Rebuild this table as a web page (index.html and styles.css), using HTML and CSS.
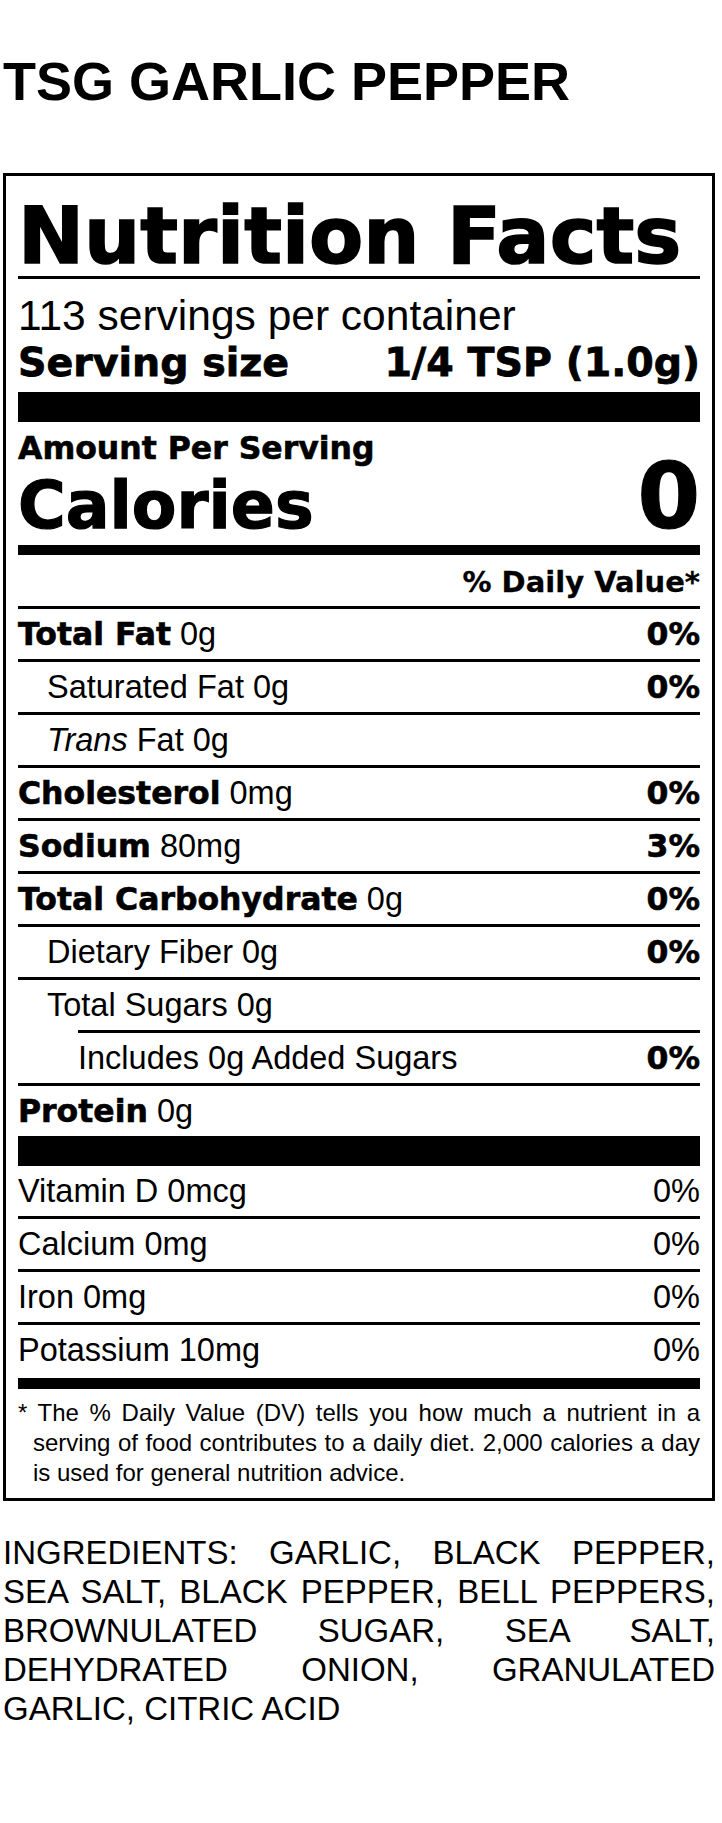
FILE: index.html
```html
<!DOCTYPE html>
<html lang="en">
<head>
<meta charset="utf-8">
<title>TSG Garlic Pepper – Nutrition Facts</title>
<link rel="stylesheet" href="styles.css">
</head>
<body>
<div class="page">
  <h1 class="product">TSG GARLIC PEPPER</h1>
  <section class="label">
    <h2 class="label-title">Nutrition Facts</h2>
    <div class="servings">
      <div class="servings-count">113 servings per container</div>
      <div class="serving-size"><span>Serving size</span><span>1/4 TSP (1.0g)</span></div>
    </div>
    <div class="calories">
      <div class="amount">Amount Per Serving</div>
      <div class="cal-row"><span class="cal-label">Calories</span><span class="cal-value">0</span></div>
    </div>
    <div class="dv-head">% Daily Value*</div>
    <div class="row"><span><b>Total Fat</b> 0g</span><b>0%</b></div>
    <div class="row ind1"><span>Saturated Fat 0g</span><b>0%</b></div>
    <div class="row ind1"><span><i>Trans</i> Fat 0g</span></div>
    <div class="row"><span><b>Cholesterol</b> 0mg</span><b>0%</b></div>
    <div class="row"><span><b>Sodium</b> 80mg</span><b>3%</b></div>
    <div class="row"><span><b>Total Carbohydrate</b> 0g</span><b>0%</b></div>
    <div class="row ind1"><span>Dietary Fiber 0g</span><b>0%</b></div>
    <div class="row ind1 no-rule"><span>Total Sugars 0g</span></div>
    <div class="added-wrap">
      <div class="row added"><span>Includes 0g Added Sugars</span><b>0%</b></div>
    </div>
    <div class="row protein"><span><b>Protein</b> 0g</span></div>
    <div class="row"><span>Vitamin D 0mcg</span><span>0%</span></div>
    <div class="row"><span>Calcium 0mg</span><span>0%</span></div>
    <div class="row"><span>Iron 0mg</span><span>0%</span></div>
    <div class="row last"><span>Potassium 10mg</span><span>0%</span></div>
    <p class="footnote">* The % Daily Value (DV) tells you how much a nutrient in a serving of food contributes to a daily diet. 2,000 calories a day is used for general nutrition advice.</p>
  </section>
  <p class="ingredients">INGREDIENTS: GARLIC, BLACK PEPPER, SEA SALT, BLACK PEPPER, BELL PEPPERS, BROWNULATED SUGAR, SEA SALT, DEHYDRATED ONION, GRANULATED GARLIC, CITRIC ACID</p>
</div>
</body>
</html>
```

FILE: styles.css
```css
html, body {
  margin: 0;
  padding: 0;
  background: #fff;
  color: #000;
}

.page {
  padding: 51px 7px 0 3px;
  font-family: "Liberation Sans", Arial, sans-serif;
}

.product {
  margin: 0 0 62px;
  font: 700 54px/60px "Liberation Sans", Arial, sans-serif;
}

.label {
  border: 3px solid #000;
  padding: 0 12px;
}

.label-title {
  margin: 21px 0 0;
  padding-bottom: 1px;
  border-bottom: 3px solid #000;
  font: 700 79px/78px "DejaVu Sans", sans-serif;
  -webkit-text-stroke: 1.6px #000;
  white-space: nowrap;
}

.servings {
  padding: 14px 0 7px;
  border-bottom: 30px solid #000;
}

.servings-count {
  font-size: 42.5px;
  line-height: 46px;
}

.serving-size {
  display: flex;
  justify-content: space-between;
  font: 700 39.5px/46px "DejaVu Sans", sans-serif;
  -webkit-text-stroke: 0.8px #000;
}

.calories {
  padding: 8px 0 15px;
  border-bottom: 10px solid #000;
}

.amount {
  font: 700 31.5px/36px "DejaVu Sans", sans-serif;
  -webkit-text-stroke: 0.6px #000;
}

.cal-row {
  display: flex;
  justify-content: space-between;
  align-items: baseline;
  margin-top: 7px;
  font-family: "DejaVu Sans", sans-serif;
  font-weight: 700;
  line-height: 48px;
  -webkit-text-stroke: 1.2px #000;
}

.cal-label {
  font-size: 65px;
}

.cal-value {
  font-size: 90px;
}

.dv-head {
  padding-top: 4px;
  border-bottom: 3px solid #000;
  text-align: right;
  font: 700 29px/47px "DejaVu Sans", sans-serif;
  -webkit-text-stroke: 0.3px #000;
}

.row {
  display: flex;
  justify-content: space-between;
  align-items: baseline;
  font-size: 32.5px;
  line-height: 50px;
  border-bottom: 3px solid #000;
  white-space: nowrap;
}

.row b {
  font-family: "DejaVu Sans", sans-serif;
  font-weight: 700;
  font-size: 31.5px;
  line-height: 1;
  -webkit-text-stroke: 0.6px #000;
}

.row i {
  font-style: italic;
}

.ind1 {
  padding-left: 29px;
}

.no-rule {
  border-bottom: 0;
}

.added-wrap {
  border-bottom: 3px solid #000;
}

.added {
  margin-left: 60px;
  border-top: 3px solid #000;
  border-bottom: 0;
}

.protein {
  border-bottom: 30px solid #000;
}

.last {
  padding-bottom: 3px;
  border-bottom: 11px solid #000;
}

.footnote {
  margin: 0;
  padding: 9px 0 10px 15px;
  text-indent: -15px;
  text-align: justify;
  font-size: 24px;
  line-height: 30px;
}

.ingredients {
  margin: 32px 0 0;
  text-align: justify;
  font-size: 33px;
  line-height: 39px;
}
```
